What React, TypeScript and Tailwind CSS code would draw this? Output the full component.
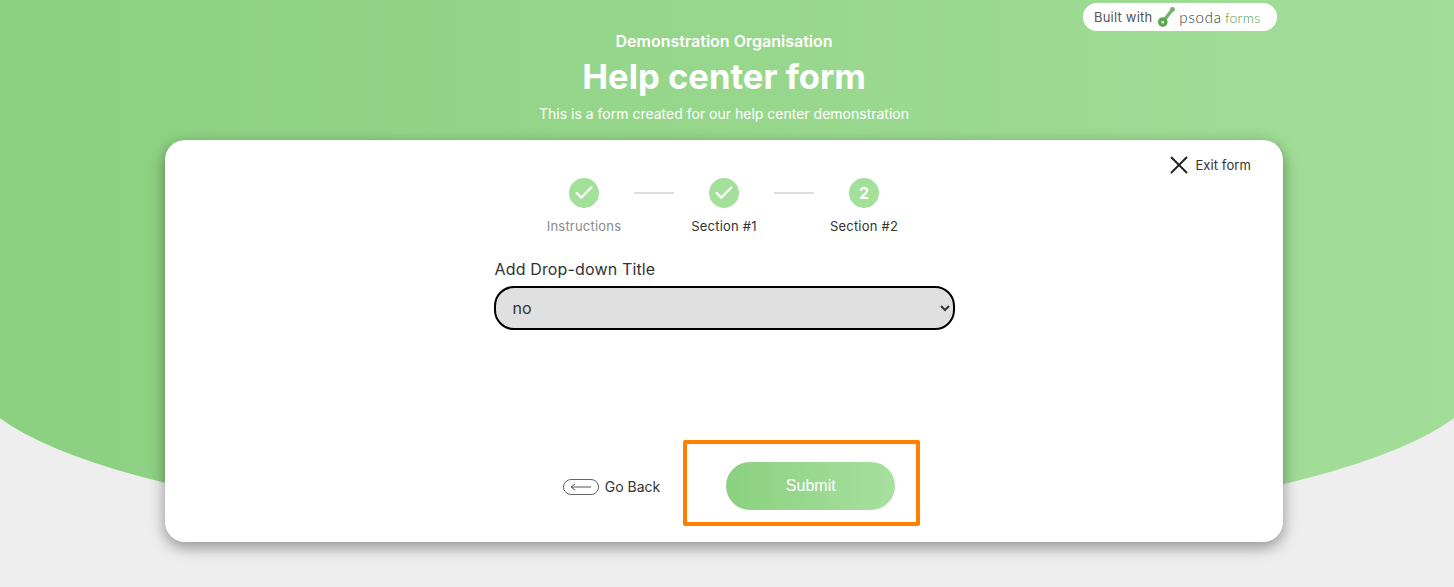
import { Check, X } from 'lucide-react';

const steps = [
  { label: 'Instructions', done: true, muted: true },
  { label: 'Section #1', done: true, muted: false },
  { label: 'Section #2', done: false, muted: false },
];

function Stepper() {
  return (
    <div className="flex items-start justify-center">
      {steps.map((step, i) => (
        <div key={step.label} className="flex items-start">
          {i > 0 && <div className="mt-[14px] h-[2px] w-10 bg-[#dddddd]" />}
          <div className="flex w-[100px] flex-col items-center">
            <div className="flex h-[30px] w-[30px] items-center justify-center rounded-full bg-[#a3e09a] text-base font-bold text-white">
              {step.done ? <Check size={22} strokeWidth={2.5} /> : '2'}
            </div>
            <span className={`mt-2 text-[13px] leading-[20px] tracking-[0.2px] ${step.muted ? 'text-[#8a8a8a]' : 'text-[#333333]'}`}>
              {step.label}
            </span>
          </div>
        </div>
      ))}
    </div>
  );
}

function BuiltWith() {
  return (
    <div className="mt-[3px] mr-[171px] flex h-7 w-[194px] items-center self-end rounded-[14px] bg-white pl-[11px] text-[#555555]">
      <span className="pt-[2px] text-[13px] tracking-[0.2px]">Built with</span>
      <svg width="20" height="20" viewBox="0 0 20 20" className="ml-[6px]">
        <path d="M7 12 L14.5 2.5" stroke="#6fb364" strokeWidth="3.4" strokeLinecap="round" fill="none" />
        <circle cx="14.5" cy="2.5" r="2.4" fill="#6fb364" />
        <circle cx="4.8" cy="15" r="4.8" fill="#5da553" />
        <circle cx="4.8" cy="15.2" r="1.3" fill="#ffffff" />
      </svg>
      <span className="ml-[1px] font-['Lato',sans-serif] text-[15px] font-light tracking-[0.8px] text-[#333333]">psoda</span>
      <span className="ml-[3px] font-['Lato',sans-serif] text-[14px] font-light tracking-[0.2px] text-[#4f9a45]">forms</span>
    </div>
  );
}

export default function App() {
  return (
    <div className="relative h-[587px] overflow-hidden bg-[#eeeeee] font-['Inter',sans-serif]">
      {/* curved green backdrop */}
      <div className="absolute top-0 left-[-33px] h-[538px] w-[1520px] bg-gradient-to-r from-[#8ad07f] to-[#a3de99] [border-radius:0_0_760px_760px/0_0_169px_169px]" />

      <div className="relative flex flex-col items-center pr-[6px]">
        <BuiltWith />
        <p className="text-base leading-[20px] font-semibold text-white">Demonstration Organisation</p>
        <h1 className="mt-1 text-[34.6px] leading-[42px] font-bold text-white">Help center form</h1>
        <p className="mt-[7px] text-sm leading-[20px] text-white">This is a form created for our help center demonstration</p>

        <div className="relative mt-4 flex h-[402px] w-[1118px] flex-col items-center rounded-[20px] bg-white pt-[38px] shadow-[0_5px_15px_rgba(0,0,0,0.4)]">
          <button className="absolute top-[10px] right-8 flex items-center gap-[1px] text-[13px] leading-[20px] tracking-[0.1px] text-[#333333]">
            <X size={30} strokeWidth={1.5} className="text-[#222222]" />
            Exit form
          </button>

          <Stepper />

          <div className="mt-[23px] w-[461px]">
            <label className="block pl-[1px] text-base leading-[20px] tracking-[0.15px] text-[#333333]">Add Drop-down Title</label>
            <select className="mt-[7px] h-[44px] w-full rounded-[20px] border-2 border-black bg-[#e0e0e0] pl-[13px] text-base text-[#333333]">
              <option>no</option>
            </select>
          </div>

          <div className="mt-[110px] ml-[35px] flex items-center">
            <button className="mt-2 mr-[23px] flex items-center gap-[6px] text-sm text-[#333333]">
              <span className="flex h-4 w-9 items-center justify-center rounded-lg border border-[#666666]">
                <svg width="22" height="8" viewBox="0 0 22 8" fill="none" stroke="#555555" strokeWidth="1">
                  <path d="M1 4 H21 M1 4 L5 1 M1 4 L5 7" />
                </svg>
              </span>
              Go Back
            </button>
            <div className="rounded-[2px] border-4 border-[#ff8000] pt-[18px] pr-[21px] pb-3 pl-[39px]">
              <button className="h-12 w-[169px] rounded-3xl bg-gradient-to-r from-[#8ad07f] to-[#a8e09f] font-['Liberation_Sans',sans-serif] text-base text-white">
                Submit
              </button>
            </div>
          </div>
        </div>
      </div>
    </div>
  );
}
